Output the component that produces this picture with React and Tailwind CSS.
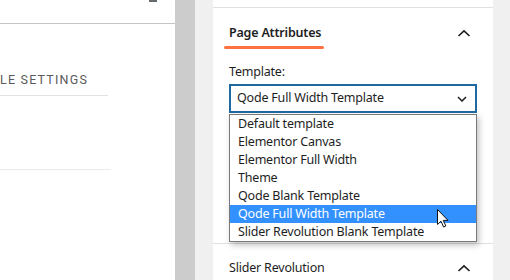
export default function App() {
  const options = [
    'Default template',
    'Elementor Canvas',
    'Elementor Full Width',
    'Theme',
    'Qode Blank Template',
    'Qode Full Width Template',
    'Slider Revolution Blank Template',
  ];
  const selected = 'Qode Full Width Template';

  return (
    <div className="w-[510px] h-[280px] flex overflow-hidden bg-[#f0f0f1] font-['Noto_Sans',sans-serif] text-[12.5px] tracking-[-0.2px] text-[#1e1e1e]">
      {/* left editor panel */}
      <div className="w-[175px] shrink-0 bg-white flex flex-col">
        <div className="h-[24px] shrink-0 border-b border-[#c3c4c7] relative">
          <div className="absolute left-[149px] top-0 w-[8px] h-[2px] bg-[#646970]" />
        </div>
        <div className="pt-[47px] font-['Roboto',sans-serif] tracking-normal">
          <div className="w-[108px] border-b border-[#e2e2e2] pb-[5px]">
            <span className="text-[12.5px] tracking-[1.2px] text-[#5a5a5a] leading-[18px]">LE SETTINGS</span>
          </div>
          <div className="w-[111px] h-[74px] border-b border-[#ebebeb]" />
        </div>
      </div>
      <div className="w-[20px] shrink-0 bg-[#cccccc]" />
      <div className="w-[18px] shrink-0 bg-[#f0f0f1]" />

      {/* sidebar */}
      <div className="w-[280px] shrink-0 bg-white flex flex-col">
        <div className="h-[8px] shrink-0 border-b border-[#e0e0e0]" />
        <div className="h-[236px] shrink-0 border-b border-[#e0e0e0] relative">
          <div className="h-[50px] flex items-center justify-between pl-4 pr-[22px]">
            <span className="relative font-semibold">
              Page Attributes
              <span className="absolute left-[-5px] right-[-3px] top-[22px] h-[3px] rounded-full bg-[#ff7143]" />
            </span>
            <ChevronUp />
          </div>
          <div className="px-4">
            <div className="mt-[5px] h-[18px] leading-[18px]">Template:</div>
            <div className="relative mt-[3px] w-[248px]">
              <div className="h-[29px] border-2 border-[#1e6aa0] flex items-center justify-between pl-[6px] pr-[8px]">
                <span>{selected}</span>
                <ChevronDown />
              </div>
              <ul className="absolute left-0 top-[30px] w-[248px] bg-white border border-[#7a7a7a] shadow-[2px_3px_6px_rgba(0,0,0,0.25)] py-0">
                {options.map((o) => (
                  <li
                    key={o}
                    className={
                      o === selected
                        ? 'h-[18px] leading-[18px] pl-[8px] bg-[#3390ff] text-white'
                        : 'h-[18px] leading-[18px] pl-[8px]'
                    }
                  >
                    {o}
                  </li>
                ))}
              </ul>
              <Pointer />
            </div>
          </div>
        </div>
        <div className="h-[48px] shrink-0 flex items-center justify-between pl-4 pr-[22px]">
          <span>Slider Revolution</span>
          <ChevronUp />
        </div>
      </div>
      <div className="flex-1 bg-[#f0f0f1]" />
    </div>
  );
}

function ChevronUp() {
  return (
    <svg width="14" height="8" viewBox="0 0 14 8" className="shrink-0">
      <polyline points="1.5,7 7,1.8 12.5,7" fill="none" stroke="#1e1e1e" strokeWidth="1.6" />
    </svg>
  );
}

function ChevronDown() {
  return (
    <svg width="10" height="6" viewBox="0 0 10 6" className="shrink-0">
      <polyline points="1,1 5,5 9,1" fill="none" stroke="#1e1e1e" strokeWidth="1.5" />
    </svg>
  );
}

function Pointer() {
  return (
    <svg
      width="13"
      height="19"
      viewBox="0 0 13 19"
      className="absolute left-[208px] top-[125px]"
    >
      <path
        d="M0.5 0.5 L0.5 15.5 L4 12.2 L6.6 18 L8.8 17 L6.3 11.4 L11 11.4 Z"
        fill="white"
        stroke="#111"
        strokeWidth="1"
        strokeLinejoin="round"
      />
    </svg>
  );
}
